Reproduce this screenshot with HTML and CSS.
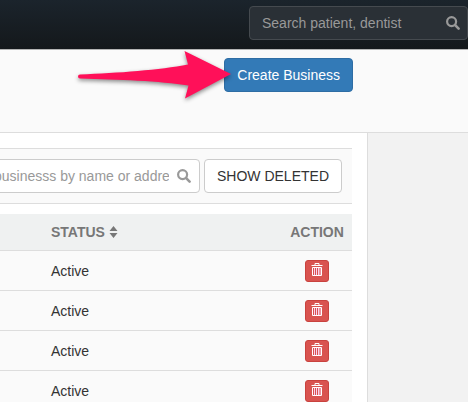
FILE: index.html
```html
<!DOCTYPE html>
<html lang="en">
<head>
<meta charset="utf-8">
<title>Businesses</title>
<link rel="stylesheet" href="styles.css">
</head>
<body>
<svg class="sprite" aria-hidden="true">
  <symbol id="search" viewBox="0 0 14 14"><circle cx="5.6" cy="5.6" r="4.500" fill="none" stroke="currentColor" stroke-width="2.200"/><path d="M9.200 9.200l3.400 3.400" stroke="currentColor" stroke-width="2.600" stroke-linecap="round"/></symbol>
  <symbol id="trash" viewBox="0 0 12 14"><path d="M4 2.5V.5h4v2M0.500 2.500h11M1.500 4.500h9v8h-9z" fill="none" stroke="#fff"/><path d="M3.500 5v7M5.500 5v7M7.500 5v7M9 5v7" stroke="#fbd3ee"/></symbol>
</svg>
<header class="topbar">
  <div class="field field-dark">
    <input type="text" placeholder="Search patient, dentist" aria-label="Search patient, dentist">
    <svg class="glass"><use href="#search"/></svg>
  </div>
</header>
<section class="page-head">
  <button class="btn btn-primary" type="button">Create Business</button>
  <svg class="arrow" viewBox="0 0 160 56" aria-hidden="true"><path d="M6 25.500C44 24 86 21 114 15.500L110.500 2L157 25L111 49.500L114.500 36.500C86 32 44 30.500 6 29.500A2 2 0 0 1 6 25.500z"/></svg>
</section>
<div class="columns">
  <main class="content">
    <div class="toolbar">
      <div class="field field-light">
        <input type="text" placeholder="businesss by name or address" aria-label="businesss by name or address">
        <svg class="glass"><use href="#search"/></svg>
      </div>
      <button class="btn btn-default" type="button">SHOW DELETED</button>
    </div>
    <table>
      <thead>
        <tr><th class="status" scope="col">STATUS <svg class="sort" viewBox="0 0 8 12"><path d="M0 5L4 0l4 5zM0 7h8l-4 5z"/></svg></th><th class="action" scope="col">ACTION</th></tr>
      </thead>
      <tbody>
        <tr><td class="status">Active</td><td class="action"><button class="delete" type="button" aria-label="Delete"><svg><use href="#trash"/></svg></button></td></tr>
        <tr><td class="status">Active</td><td class="action"><button class="delete" type="button" aria-label="Delete"><svg><use href="#trash"/></svg></button></td></tr>
        <tr><td class="status">Active</td><td class="action"><button class="delete" type="button" aria-label="Delete"><svg><use href="#trash"/></svg></button></td></tr>
        <tr><td class="status">Active</td><td class="action"><button class="delete" type="button" aria-label="Delete"><svg><use href="#trash"/></svg></button></td></tr>
      </tbody>
    </table>
  </main>
</div>
</body>
</html>
```

FILE: styles.css
```css
* { box-sizing: border-box; }

body {
  margin: 0;
  height: 100vh;
  overflow: hidden;
  background: #f2f2f2;
  color: #333;
  font: 14px/20px "Liberation Sans", Arial, sans-serif;
}

button, input { font: inherit; }

.sprite { display: none; }

.topbar {
  display: flex;
  justify-content: flex-end;
  height: 50px;
  padding-top: 6px;
  background: linear-gradient(#1b242c, #14181b);
  border-bottom: 1px solid #b4b4b4;
}

.field {
  position: relative;
  flex: 0 0 219px;
  height: 34px;
}

.field input {
  width: 100%;
  height: 34px;
  padding: 6px 30px 6px 12px;
  border: 1px solid #ccc;
  border-radius: 4px;
  outline: 0;
  appearance: none;
  background: #fff;
  color: #555;
}

.field input::placeholder { color: #999; opacity: 1; }

.field-dark input {
  background: #2a3036;
  border-color: #454a4f;
}

.glass {
  position: absolute;
  top: 10px;
  right: 9px;
  width: 14px;
  height: 14px;
  color: #999;
}

.field-dark .glass { right: 8px; }

.page-head {
  position: relative;
  display: flex;
  justify-content: flex-end;
  height: 83px;
  padding: 8px 115px 0 0;
  background: #fafafa;
  border-bottom: 1px solid #ddd;
}

.btn {
  height: 34px;
  padding: 0 12px;
  border: 1px solid #ccc;
  border-radius: 4px;
  background: #fff;
  color: #333;
  white-space: nowrap;
}

.btn-primary {
  background: #337ab7;
  border-color: #2e6da4;
  color: #fff;
}

.arrow {
  position: absolute;
  top: -1px;
  right: 234px;
  width: 160px;
  height: 56px;
  overflow: visible;
  fill: #ff1059;
  filter: drop-shadow(0 2px 2px rgba(0, 0, 0, .45));
}

.columns {
  display: grid;
  grid-template-columns: 1fr 100px;
  min-height: calc(100vh - 133px);
}

.content {
  min-width: 0;
  padding: 15px 15px 0 0;
  background: #fff;
  border-right: 1px solid #ddd;
}

.toolbar {
  display: flex;
  justify-content: flex-end;
  gap: 4px;
  margin-bottom: 10px;
  padding: 10px;
  background: #fafafa;
  border: solid #ddd;
  border-width: 1px 0;
}

table {
  width: 100%;
  table-layout: fixed;
  border-collapse: separate;
  border-spacing: 0;
}

th, td {
  height: 40px;
  padding: 0;
  background: #fafafa;
  border-bottom: 1px solid #ddd;
  text-align: left;
}

th {
  height: 37px;
  background: #eff1f1;
  color: #777;
}

.status { padding-left: 51px; }

.action {
  width: 70px;
  text-align: center;
}

.sort {
  width: 9px;
  height: 12px;
  vertical-align: -1px;
  fill: #777;
}

.delete {
  display: block;
  width: 24px;
  height: 22px;
  margin: 0 auto;
  padding: 2px 5px 4px;
  border: 1px solid #c9423e;
  border-radius: 3px;
  background: #d9534f;
}

.delete svg {
  display: block;
  width: 12px;
  height: 14px;
}
```
